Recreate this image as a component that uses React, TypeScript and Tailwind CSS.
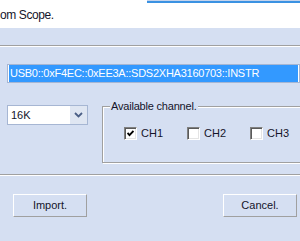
const Check = ({ checked, label }: { checked?: boolean; label: string }) => (
  <div className="w-[63px] flex items-center shrink-0">
    <div className="w-[13px] h-[13px] border border-t-[#808080] border-l-[#808080] border-b-white border-r-white bg-white shadow-[inset_1px_1px_0_#5a5a5a,inset_-1px_-1px_0_#e4e4e4] flex items-center justify-center">
      {checked && (
        <svg width="7" height="7" viewBox="0 0 7 7">
          <polyline points="0.5,3 2.5,5.2 6.5,1" fill="none" stroke="#000" strokeWidth="1.9" />
        </svg>
      )}
    </div>
    <span className="ml-[4px] leading-[13px]">{label}</span>
  </div>
);

export default function App() {
  return (
    <div className="w-[300px] h-[241px] overflow-hidden bg-[#d5dff2] flex flex-col font-['Liberation_Sans',Arial,sans-serif] text-[11px] text-[#14142a]">
      {/* Caption strip */}
      <div className="h-[28px] bg-white flex flex-col shrink-0">
        <div className="flex h-[3px]">
          <div className="w-[147px]" />
          <div className="flex-1 bg-[#c4d3ec] border-b-2 border-[#3a92e2]" />
        </div>
        <div className="pt-[5px] text-[12px] leading-[14px] tracking-[-0.4px]">om Scope.</div>
      </div>

      <div className="mt-[17px] h-[2px] border-t border-[#a0a0a0] border-b border-b-white shrink-0" />

      {/* Resource string */}
      <div className="mt-[17px] ml-[7px] w-[293px] h-[19px] border border-[#a6b6d3] bg-white px-[1px] flex shrink-0">
        <div className="flex-1 bg-[#3399ff] text-white leading-[17px] pl-[1px] tracking-[-0.25px] whitespace-nowrap overflow-hidden">
          USB0::0xF4EC::0xEE3A::SDS2XHA3160703::INSTR
        </div>
      </div>

      <div className="flex mt-[18px] ml-[7px] shrink-0">
        {/* Memory depth combo */}
        <div className="mt-[4px] w-[81px] h-[20px] border border-[#a6b6d3] bg-white flex shrink-0">
          <div className="flex-1 pl-[3px] leading-[18px]">16K</div>
          <div className="w-[17px] bg-[#dfe6f2] flex items-center justify-center">
            <svg width="9" height="6" viewBox="0 0 9 6">
              <polyline points="1,1 4.5,4.5 8,1" fill="none" stroke="#4b5f86" strokeWidth="1.8" />
            </svg>
          </div>
        </div>

        {/* Channel group */}
        <div className="relative ml-[14px] mt-[5px] w-[220px] h-[57px] border border-[#a0a0a0] shadow-[inset_1px_1px_0_#fff,1px_1px_0_#fff] shrink-0">
          <div className="absolute top-[-7px] left-[7px] px-[1px] bg-[#d5dff2] leading-[13px] tracking-[-0.2px]">
            Available channel.
          </div>
          <div className="flex pl-[21px] pt-[20px]">
            <Check checked label="CH1" />
            <Check label="CH2" />
            <Check label="CH3" />
          </div>
        </div>
      </div>

      <div className="mt-[11px] h-[2px] border-t border-[#a0a0a0] border-b border-b-white shrink-0" />

      {/* Buttons */}
      <div className="mt-[18px] flex justify-between pl-[13px] pr-[3px] shrink-0">
        <button className="w-[74px] h-[23px] border border-t-white border-l-white border-b-[#a0a0a0] border-r-[#a0a0a0] bg-[#d5dff2] leading-[21px]">
          Import.
        </button>
        <button className="w-[74px] h-[23px] border border-t-white border-l-white border-b-[#a0a0a0] border-r-[#a0a0a0] bg-[#d5dff2] leading-[21px]">
          Cancel.
        </button>
      </div>
    </div>
  );
}
